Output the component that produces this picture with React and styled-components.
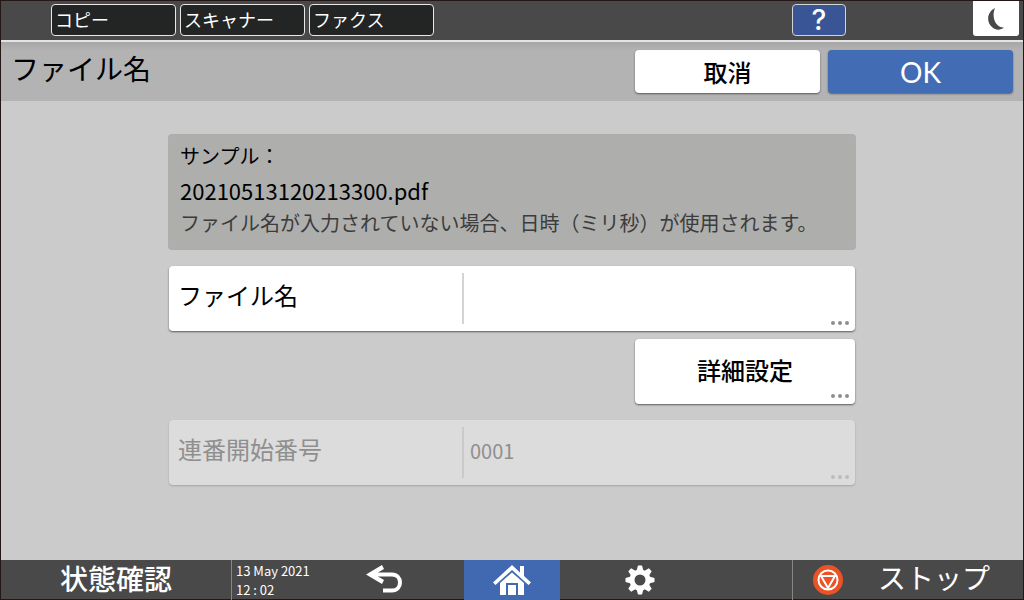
import React from "react";
import styled, { createGlobalStyle } from "styled-components";

const jp = '"Noto Sans CJK JP", sans-serif';

const GlobalStyle = createGlobalStyle`
  *, *::before, *::after { box-sizing: border-box; }
  body { margin: 0; background: #cbcbcb; font-family: ${jp}; color: #000; }
  button, input { font: inherit; color: inherit; margin: 0; }
  button { cursor: pointer; }
`;

const Screen = styled.div`
  display: flex;
  flex-direction: column;
  min-height: 100vh;
  border: 1px solid #231815;
  background: #cbcbcb;
`;

const TopBar = styled.nav`
  display: flex;
  justify-content: space-between;
  height: 41px;
  padding: 0 4px 0 50px;
  background: #4a4949;
  border-bottom: 2px solid #e4e4e4;
`;

const TabList = styled.div`
  display: flex;
  gap: 4px;
  padding-top: 3px;
`;

const AppTab = styled.button`
  width: 125px;
  height: 32px;
  padding: 0 3px 2px;
  border: 1px solid #e8e8e8;
  border-radius: 4px;
  background: #232525;
  color: #fff;
  font-size: 18px;
  line-height: 24px;
  text-align: left;
`;

const TopActions = styled.div`
  display: flex;
  gap: 127px;
`;

const HelpButton = styled.button`
  width: 54px;
  height: 32px;
  margin-top: 3px;
  padding: 0;
  border: 1px solid #d4d4d4;
  border-radius: 4px;
  background: #3a5596;
  color: #fff;
  font-family: Inter, sans-serif;
  font-size: 28px;
  font-weight: 500;
  line-height: 28px;
`;

const SleepButton = styled.button`
  display: flex;
  align-items: center;
  justify-content: center;
  width: 46px;
  height: 35px;
  padding: 0;
  border: 0;
  border-radius: 0 0 3px 3px;
  background: #fff;
`;

const TitleBar = styled.header`
  display: flex;
  align-items: flex-start;
  justify-content: space-between;
  height: 59px;
  padding: 8px 10px 0;
  background: linear-gradient(#a6a6a6, #b3b3b3 8px);
`;

const Title = styled.h1`
  margin: 0;
  font-size: 28px;
  font-weight: 400;
  line-height: 36px;
`;

const Actions = styled.div`
  display: flex;
  gap: 8px;
`;

const ActionButton = styled.button`
  width: 185px;
  height: 43px;
  padding: 0;
  border: 0;
  border-radius: 4px;
  box-shadow: 0 1px 2px rgba(0, 0, 0, 0.5);
  background: ${(p) => (p.$primary ? "#426cb4" : "#fff")};
  color: ${(p) => (p.$primary ? "#fff" : "#000")};
  font-family: ${(p) => (p.$primary ? "Lato, sans-serif" : jp)};
  font-size: ${(p) => (p.$primary ? 28 : 24)}px;
  font-weight: ${(p) => (p.$primary ? 400 : 500)};
  line-height: 40px;
`;

const Content = styled.main`
  flex: 1;
  display: flex;
  flex-direction: column;
  width: 100%;
  max-width: 688px;
  margin: 0 auto;
  padding: 33px 0 24px;
`;

const Sample = styled.section`
  height: 116px;
  margin-bottom: 16px;
  padding: 8px 12px;
  border-radius: 4px;
  background: #aeaead;
`;

const SampleLabel = styled.p`
  margin: 0;
  font-size: 20px;
  line-height: 28px;
`;

const SampleName = styled.p`
  margin: 0;
  font-size: 22px;
  line-height: 40px;
`;

const SampleNote = styled.p`
  margin: 0;
  color: #3c3c3c;
  font-size: 20px;
  line-height: 26px;
  white-space: nowrap;
`;

const panel = `
  height: 65px;
  border: 0;
  border-radius: 4px;
  background: #fff;
  box-shadow: 0 1px 2px rgba(0, 0, 0, 0.55);
`;

const Field = styled.div`
  ${panel}
  position: relative;
  display: flex;
  margin: 0 1px;
  padding: 7px 0;
  ${(p) =>
    p.$disabled &&
    `background: #dcdcdc; color: #8f8f8f; box-shadow: 0 1px 2px rgba(0, 0, 0, 0.2);`}
`;

const FieldLabel = styled.label`
  width: 295px;
  padding: 4px 9px;
  border-right: 2px solid ${(p) => (p.$disabled ? "#cacaca" : "#d4d4d4")};
  font-size: 24px;
  line-height: 36px;
`;

const FieldInput = styled.input`
  flex: 1;
  min-width: 0;
  padding: 0 40px 4px 6px;
  border: 0;
  outline: 0;
  background: transparent;
  font-size: 20px;
`;

const DetailButton = styled.button`
  ${panel}
  position: relative;
  align-self: flex-end;
  width: 220px;
  margin: 8px 1px 16px;
  padding: 0 0 4px;
  font-size: 24px;
  font-weight: 500;
`;

const Dots = styled.svg`
  position: absolute;
  right: 6px;
  bottom: 5px;
  fill: ${(p) => (p.$disabled ? "#bcbcbc" : "#8e8e8e")};
`;

const More = ({ disabled }) => (
  <Dots $disabled={disabled} width="18" height="6" aria-hidden="true">
    <circle cx="2" cy="3" r="2" />
    <circle cx="9" cy="3" r="2" />
    <circle cx="16" cy="3" r="2" />
  </Dots>
);

const Footer = styled.footer`
  display: grid;
  grid-template-columns: 230px 233px 96px 1fr 231px;
  height: 39px;
  background: #4a4949;
  color: #fff;
`;

const StatusButton = styled.button`
  padding: 0 0 4px;
  border: 0;
  background: transparent;
  font-size: 28px;
  font-weight: 500;
  line-height: 35px;
`;

const ClockArea = styled.div`
  display: flex;
  justify-content: space-between;
  padding-right: 60px;
  border-left: 1px solid #858585;
`;

const Clock = styled.time`
  display: flex;
  flex-direction: column;
  padding: 1px 4px;
  font-size: 13px;
  line-height: 19px;
  white-space: nowrap;
`;

const IconButton = styled.button`
  display: flex;
  align-items: center;
  justify-content: center;
  padding: 0;
  border: 0;
  background: ${(p) => (p.$active ? "#4169b1" : "transparent")};
`;

const SettingsArea = styled.div`
  display: flex;
  padding-left: 65px;
`;

const StopButton = styled.button`
  display: flex;
  align-items: center;
  gap: 34px;
  padding: 0 0 0 19px;
  border: 0;
  border-left: 1px solid #858585;
  background: transparent;
  font-size: 28px;
  line-height: 32px;
`;

const StopLabel = styled.span`
  padding-bottom: 6px;
`;

const MoonIcon = () => (
  <svg width="18" height="24" viewBox="0 0 18 24" aria-hidden="true">
    <path d="M8 1C0 5-1 15 5 20C9 24 14 23 17 20.500C9 21 4 11 8 1Z" fill="#4a4949" />
  </svg>
);

const BackIcon = () => (
  <svg width="38" height="30" viewBox="0 0 38 30" aria-hidden="true">
    <path d="M0 9.500L16 0L18 4L12 7.500V11.500L18 15L16 19Z" fill="#fff" />
    <path d="M9 9.500H26C31 9.500 34 13 34 17.500C34 22 31 25.500 26 25.500H17" fill="none" stroke="#fff" strokeWidth="4" />
  </svg>
);

const HomeIcon = () => (
  <svg width="40" height="32" viewBox="0 0 40 32" aria-hidden="true">
    <g fill="#fff">
      <path d="M20 1L28 8.500V2H32V12L39 18.500L36.500 21L20 6L3.500 21L1 18.500Z" />
      <path fillRule="evenodd" d="M20 8.500L32 19V31H26V19H14V31H8V19Z" />
      <rect x="16" y="21" width="8" height="10" />
    </g>
  </svg>
);

const GearIcon = () => (
  <svg width="30" height="30" viewBox="-15 -15 30 30" aria-hidden="true">
    <circle r="8" fill="none" stroke="#fff" strokeWidth="5" />
    {[0, 45, 90, 135, 180, 225, 270, 315].map((a) => (
      <path key={a} d="M-3.500-9L-2-14.500H2L3.500-9Z" fill="#fff" transform={`rotate(${a})`} />
    ))}
  </svg>
);

const StopIcon = () => (
  <svg width="32" height="32" viewBox="0 0 32 32" aria-hidden="true">
    <circle cx="16" cy="16" r="15" fill="#e95325" />
    <g fill="none" stroke="#fff" strokeWidth="2" strokeLinejoin="round">
      <circle cx="16" cy="16" r="9.500" />
      <path d="M9 12H23L16 24Z" />
    </g>
  </svg>
);

const tabs = ["コピー", "スキャナー", "ファクス"];

export default function App() {
  return (
    <>
      <GlobalStyle />
      <Screen lang="ja">
        <TopBar>
          <TabList>
            {tabs.map((t) => (
              <AppTab key={t}>{t}</AppTab>
            ))}
          </TabList>
          <TopActions>
            <HelpButton>?</HelpButton>
            <SleepButton aria-label="スリープ">
              <MoonIcon />
            </SleepButton>
          </TopActions>
        </TopBar>
        <TitleBar>
          <Title>ファイル名</Title>
          <Actions>
            <ActionButton>取消</ActionButton>
            <ActionButton $primary>OK</ActionButton>
          </Actions>
        </TitleBar>
        <Content>
          <Sample>
            <SampleLabel>サンプル：</SampleLabel>
            <SampleName>20210513120213300.pdf</SampleName>
            <SampleNote>ファイル名が入力されていない場合、日時（ミリ秒）が使用されます。</SampleNote>
          </Sample>
          <Field>
            <FieldLabel htmlFor="file-name">ファイル名</FieldLabel>
            <FieldInput id="file-name" type="text" />
            <More />
          </Field>
          <DetailButton>
            詳細設定
            <More />
          </DetailButton>
          <Field $disabled>
            <FieldLabel htmlFor="start-number" $disabled>連番開始番号</FieldLabel>
            <FieldInput id="start-number" type="text" defaultValue="0001" disabled />
            <More disabled />
          </Field>
        </Content>
        <Footer>
          <StatusButton>状態確認</StatusButton>
          <ClockArea>
            <Clock dateTime="2021-05-13T12:02">
              <span>13 May 2021</span>
              <span>12 : 02</span>
            </Clock>
            <IconButton aria-label="戻る">
              <BackIcon />
            </IconButton>
          </ClockArea>
          <IconButton $active aria-label="ホーム">
            <HomeIcon />
          </IconButton>
          <SettingsArea>
            <IconButton aria-label="設定">
              <GearIcon />
            </IconButton>
          </SettingsArea>
          <StopButton>
            <StopIcon />
            <StopLabel>ストップ</StopLabel>
          </StopButton>
        </Footer>
      </Screen>
    </>
  );
}
